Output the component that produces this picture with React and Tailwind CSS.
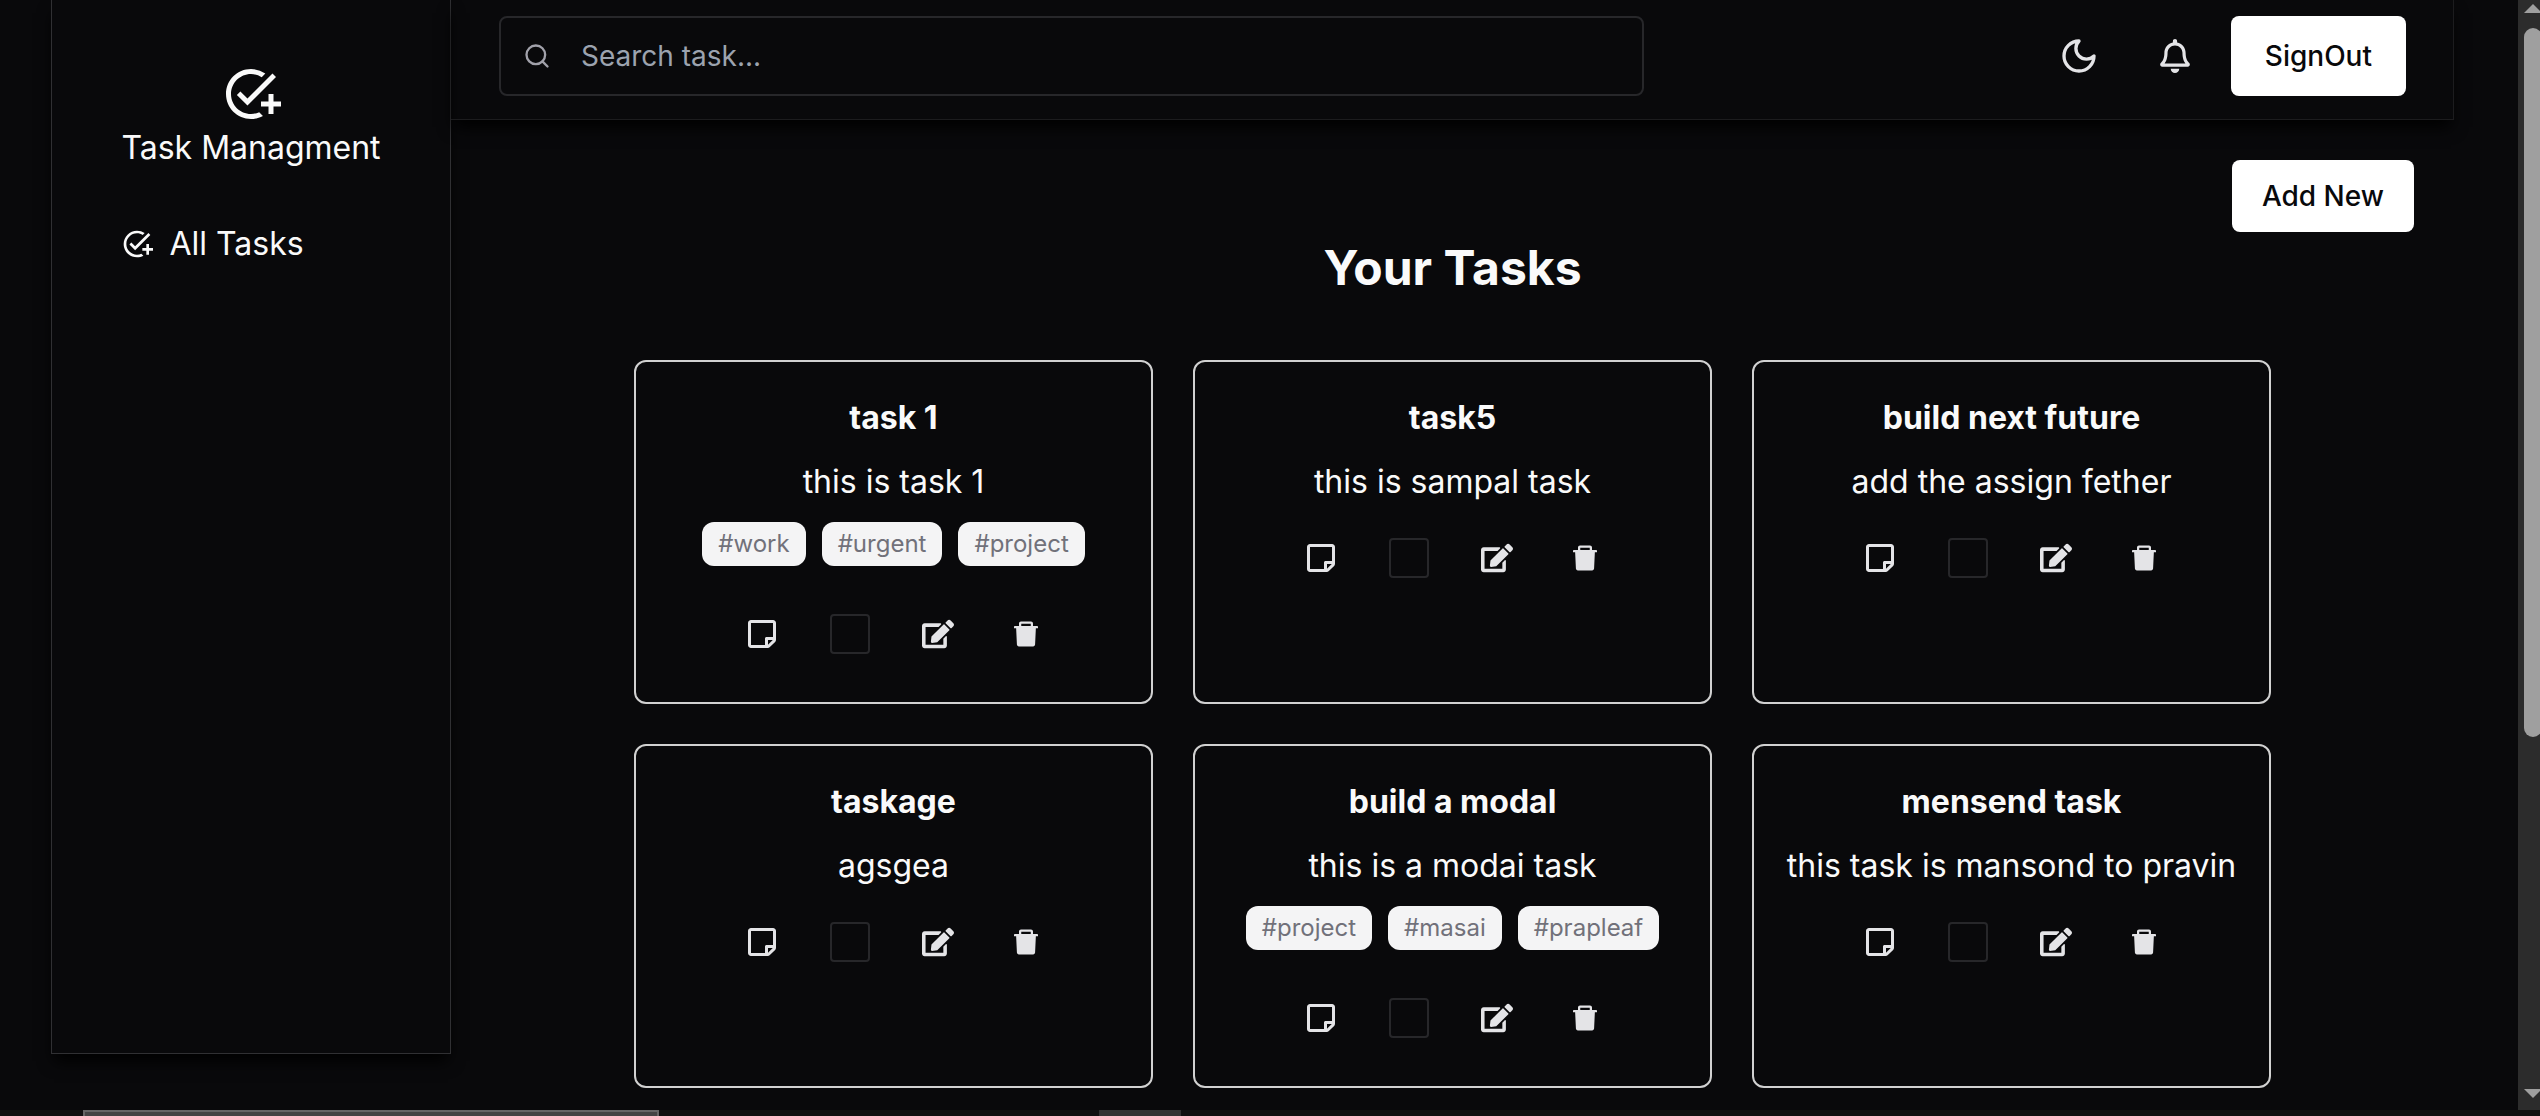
import { MdAddTask } from "react-icons/md";
import { FaRegBell, FaRegStickyNote, FaEdit } from "react-icons/fa";
import { AiFillDelete } from "react-icons/ai";
import { Search } from "lucide-react";

const tasks = [
  { title: "task 1", text: "this is task 1", tags: ["#work", "#urgent", "#project"] },
  { title: "task5", text: "this is sampal task", tags: [] },
  { title: "build next future", text: "add the assign fether", tags: [] },
  { title: "taskage", text: "agsgea", tags: [] },
  { title: "build a modal", text: "this is a modai task", tags: ["#project", "#masai", "#prapleaf"] },
  { title: "mensend task", text: "this task is mansond to pravin", tags: [] },
];

function MoonIcon() {
  return (
    <svg viewBox="0 0 24 24" fill="none" stroke="currentColor" strokeWidth="2" strokeLinecap="round" strokeLinejoin="round" className="size-10" aria-hidden="true">
      <path d="M12 3a6 6 0 0 0 9 9 9 9 0 1 1-9-9Z" />
    </svg>
  );
}

function Sidebar() {
  return (
    <aside className="flex h-[1054px] w-[400px] shrink-0 flex-col items-center border border-t-0 border-[#303033] pt-16 shadow-[0_10px_15px_-3px_#000]">
      <div className="flex flex-col">
        <div className="flex flex-col items-center">
          <MdAddTask size={60} />
          <span className="text-[32px] leading-12">Task Managment</span>
        </div>
        <nav className="mt-12">
          <a href="#tasks" className="flex items-center gap-4 text-[32px] leading-12">
            <MdAddTask size={32} />
            All Tasks
          </a>
        </nav>
      </div>
    </aside>
  );
}

function Header() {
  return (
    <header className="flex h-[120px] items-start justify-between border-r border-b border-[#1c1c1e] pt-4 pr-[47px] pl-12 shadow-[0_10px_15px_-3px_#000]">
      <label className="flex h-20 w-full max-w-[1145px] items-center rounded-lg border-2 border-[#27272a] pl-[22px]">
        <Search size={28} strokeWidth={2} className="shrink-0 text-[#a1a1aa]" />
        <input type="search" aria-label="Search task" placeholder="Search task..." className="w-full bg-transparent px-[30px] text-[28px] leading-10 outline-none placeholder:text-[#9ca3af]" />
      </label>
      <div className="flex gap-4 text-[#e4e4e7]">
        <button type="button" aria-label="Toggle theme" className="flex size-20 items-center justify-center"><MoonIcon /></button>
        <button type="button" aria-label="Notifications" className="flex size-20 items-center justify-center"><FaRegBell size={34} /></button>
        <button type="button" className="h-20 rounded-lg bg-white px-[34px] text-[28px] font-medium text-[#09090b]">SignOut</button>
      </div>
    </header>
  );
}

function TaskCard({ task }) {
  return (
    <li className="flex min-h-[344px] flex-col items-center rounded-xl border-2 border-[#d1d1d1] px-4 pt-8 pb-12">
      <h2 className="text-[32px] leading-12 font-bold">{task.title}</h2>
      <p className="mt-4 text-[32px] leading-12 whitespace-nowrap">{task.text}</p>
      <div className="mt-4 flex gap-4">
        {task.tags.map((tag) => (
          <span key={tag} className="mb-8 rounded-xl bg-[#f4f4f5] px-4 py-1 text-2xl leading-9 text-[#71717a]">{tag}</span>
        ))}
      </div>
      <div className="mt-4 flex gap-12 text-[#e4e4e7]">
        <button type="button" aria-label="Note" className="flex size-10 items-center justify-center"><FaRegStickyNote size={32} /></button>
        <input type="checkbox" aria-label={`Mark ${task.title} as done`} className="size-10 appearance-none rounded border-2 border-[#27272a]" />
        <button type="button" aria-label="Edit" className="flex size-10 items-center justify-center"><FaEdit size={32} /></button>
        <button type="button" aria-label="Delete" className="flex size-10 items-center justify-center"><AiFillDelete size={32} /></button>
      </div>
    </li>
  );
}

function Scrollbar() {
  return (
    <div className="flex w-[22px] shrink-0 flex-col overflow-hidden bg-[#2c2c2c] pl-1.5" aria-hidden="true">
      <svg width="18" height="28" viewBox="0 0 18 28" className="shrink-0" fill="#9f9f9f"><path d="M0 13 9 4l9 9Z" /></svg>
      <div className="h-[709px] w-[18px] rounded-full bg-[#9f9f9f]" />
      <svg width="18" height="22" viewBox="0 0 18 22" className="mt-auto shrink-0" fill="#9f9f9f"><path d="M0 1h18l-9 9Z" /></svg>
    </div>
  );
}

export default function App() {
  return (
    <div className="flex h-screen flex-col overflow-hidden bg-[#09090b] text-[#fafafa]" style={{ fontFamily: "Inter, sans-serif" }}>
      <div className="flex min-h-0 flex-1">
        <div className="flex min-w-0 flex-1 overflow-hidden pr-16 pl-[51px]">
          <Sidebar />
          <div className="min-w-0 flex-1">
            <Header />
            <main id="tasks" className="p-10">
              <div className="flex justify-end">
                <button type="button" className="h-18 rounded-lg bg-white px-[30px] text-[28px] font-medium text-[#09090b]">Add New</button>
              </div>
              <h1 className="text-center text-5xl leading-18 font-bold">Your Tasks</h1>
              <ul className="mx-auto mt-14 grid max-w-[1637px] grid-cols-3 gap-10">
                {tasks.map((task) => <TaskCard key={task.title} task={task} />)}
              </ul>
            </main>
          </div>
        </div>
        <Scrollbar />
      </div>
      <div className="flex h-1.5 shrink-0 bg-[#111111]" aria-hidden="true">
        <div className="ml-[83px] w-[576px] border-2 border-b-0 border-[#666666] bg-[#444444]" />
        <div className="ml-[440px] w-[82px] bg-[#333333]" />
      </div>
    </div>
  );
}
